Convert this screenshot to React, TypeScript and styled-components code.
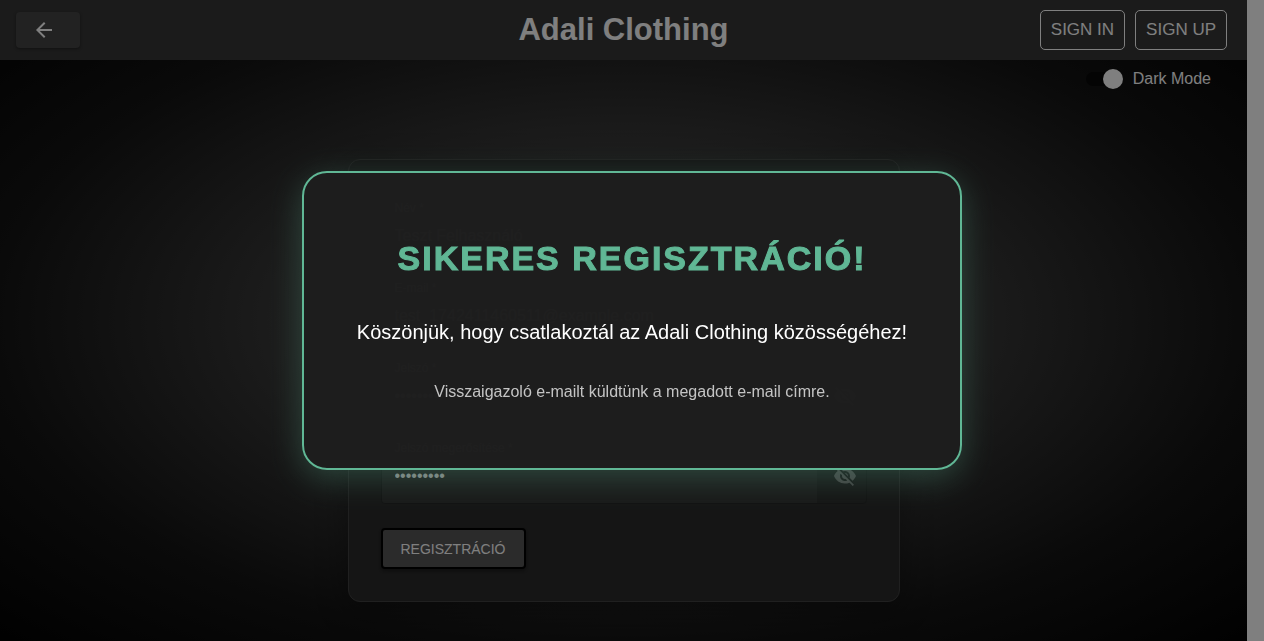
import React from 'react';
import styled, { createGlobalStyle } from 'styled-components';

const GlobalStyle = createGlobalStyle`
  *, *::before, *::after { box-sizing: border-box; }
  html, body, #root { height: 100%; }
  body {
    margin: 0;
    overflow: hidden;
    background: #000;
    color: #fff;
    font-family: "Liberation Sans", Arial, sans-serif;
  }
  button, input { font: inherit; color: inherit; }
`;

const Screen = styled.div`
  display: grid;
  grid-template-columns: 1fr 17px;
  height: 100%;
`;

const Page = styled.div`
  height: 100%;
  overflow: hidden;
  background: radial-gradient(ellipse at center, #646464 0%, #141414 72%, #020202 100%);
`;

const ScrollTrack = styled.div`
  background: #fff;
`;

const Header = styled.header`
  display: grid;
  grid-template-columns: 1fr auto 1fr;
  align-items: center;
  height: 60px;
  background: #363636;
`;

const BackButton = styled.button`
  display: flex;
  align-items: center;
  width: 64px;
  height: 36px;
  margin-left: 16px;
  padding: 0 16px;
  border: 0;
  border-radius: 4px;
  background: #444;
  box-shadow: 0 1px 3px rgba(0, 0, 0, 0.4);
`;

const Brand = styled.h1`
  margin: 0;
  font-size: 31px;
  line-height: 60px;
  height: 60px;
`;

const Actions = styled.nav`
  display: flex;
  justify-content: flex-end;
  gap: 10px;
  padding-right: 20px;
`;

const OutlineButton = styled.button`
  height: 40px;
  padding: 0 10px;
  border: 1px solid #fff;
  border-radius: 5px;
  background: none;
  font-size: 17px;
  line-height: 36px;
`;

const ModeRow = styled.label`
  display: flex;
  align-items: center;
  justify-content: flex-end;
  gap: 10px;
  height: 38px;
  padding-right: 36px;
  font-size: 16px;
`;

const Switch = styled.input`
  appearance: none;
  display: flex;
  align-items: center;
  justify-content: flex-end;
  width: 37px;
  height: 14px;
  margin: 0;
  border-radius: 7px;
  background: #080808;
  &::before {
    content: "";
    flex: none;
    width: 20px;
    height: 20px;
    border-radius: 50%;
    background: #fff;
  }
`;

const CardArea = styled.main`
  position: relative;
  isolation: isolate;
  width: 552px;
  max-width: 100%;
  margin: 61px auto 0;
`;

const Emblem = styled.svg`
  position: absolute;
  z-index: -1;
  top: 134px;
  left: -26px;
`;

const FormCard = styled.form`
  padding: 48px 32px 32px;
  border: 1px solid #404040;
  border-radius: 12px;
  background: #2b2b2b;
  box-shadow: 0 8px 32px rgba(0, 0, 0, 0.3);
`;

const Field = styled.div`
  position: relative;
  margin-bottom: 24px;
`;

/* The shrunken label sits over the top border of its input. */
const FieldLabel = styled.label`
  position: absolute;
  top: -8px;
  left: 14px;
  font-size: 12px;
  line-height: 16px;
`;

const InputRow = styled.div`
  display: flex;
  height: 56px;
  border-radius: 4px;
  overflow: hidden;
  border: 1px solid #242424;
`;

const TextInput = styled.input`
  flex: 1;
  min-width: 0;
  padding: 0 13px;
  border: 0;
  background: #333;
  font-size: 16px;
`;

const EyeButton = styled.button`
  display: grid;
  place-items: center;
  width: 49px;
  padding: 0 0 0 8px;
  border: 0;
  background: transparent;
  color: #808080;
`;

const SubmitButton = styled.button`
  display: block;
  height: 41px;
  padding: 0 18px;
  border: 2px solid #000;
  border-radius: 4px;
  background: #565656;
  box-shadow: 0 2px 4px rgba(0, 0, 0, 0.4);
  font-size: 14px;
`;

const Backdrop = styled.div`
  position: fixed;
  inset: 0;
  display: grid;
  place-items: center;
  background: rgba(0, 0, 0, 0.5);
`;

const Dialog = styled.section`
  width: 660px;
  max-width: 90%;
  padding: 63px 32px 64px;
  border: 2px solid #60b795;
  border-radius: 25px;
  background: rgba(30, 30, 30, 0.98);
  box-shadow: 0 8px 32px rgba(96, 183, 149, 0.3);
  text-align: center;
`;

const DialogTitle = styled.h2`
  margin: 0 0 36px;
  color: #60b795;
  font-size: 34px;
  font-weight: 900;
  line-height: 44px;
  letter-spacing: 2px;
  -webkit-text-stroke: 1px currentColor;
`;

const DialogLead = styled.p`
  margin: 0 0 32px;
  font-size: 20px;
  line-height: 32px;
`;

const DialogNote = styled.p`
  margin: 0;
  color: #c4c4c4;
  font-size: 16px;
  line-height: 24px;
`;

const ArrowIcon = () => (
  <svg width="24" height="24" viewBox="0 0 24 24" fill="currentColor" aria-hidden="true">
    <path d="M20 11H7.83l5.59-5.59L12 4l-8 8 8 8 1.41-1.41L7.83 13H20v-2z" />
  </svg>
);

const EyeOffIcon = () => (
  <svg width="24" height="24" viewBox="0 0 24 24" fill="currentColor" aria-hidden="true">
    <path d="M12 7c2.76 0 5 2.24 5 5 0 .65-.13 1.26-.36 1.83l2.92 2.92c1.51-1.26 2.7-2.89 3.43-4.75-1.73-4.39-6-7.5-11-7.5-1.4 0-2.74.25-3.98.7l2.16 2.16C10.74 7.13 11.35 7 12 7zM2 4.27l2.28 2.28.46.46C3.08 8.3 1.78 10.02 1 12c1.73 4.39 6 7.5 11 7.5 1.55 0 3.03-.3 4.38-.84l.42.42L19.73 22 21 20.73 3.27 3 2 4.27zM7.53 9.8l1.55 1.55c-.05.21-.08.43-.08.65 0 1.66 1.34 3 3 3 .22 0 .44-.03.65-.08l1.55 1.55c-.67.33-1.41.53-2.2.53-2.76 0-5-2.24-5-5 0-.79.2-1.53.53-2.2zm4.31-.78l3.15 3.15.02-.16c0-1.66-1.34-3-3-3l-.17.01z" />
  </svg>
);

const fields = [
  { id: 'name', label: 'Név *', type: 'text', value: 'Teszt Felhasználó' },
  { id: 'email', label: 'E-mail *', type: 'email', value: 'test_1742411460511@example.com' },
  { id: 'password', label: 'Jelszó *', type: 'password', value: 'Password1' },
  { id: 'confirm', label: 'Jelszó megerősítése *', type: 'password', value: 'Password1' },
];

export default function App() {
  return (
    <>
      <GlobalStyle />
      <Screen>
        <Page>
          <Header>
            <BackButton type="button" aria-label="Vissza"><ArrowIcon /></BackButton>
            <Brand>Adali Clothing</Brand>
            <Actions>
              <OutlineButton type="button">SIGN IN</OutlineButton>
              <OutlineButton type="button">SIGN UP</OutlineButton>
            </Actions>
          </Header>
          <ModeRow>
            <Switch type="checkbox" role="switch" defaultChecked />
            Dark Mode
          </ModeRow>
          <CardArea>
            <Emblem width="76" height="80" viewBox="0 0 76 80" fill="none" stroke="#000" strokeWidth="2" aria-hidden="true">
              <path d="M5 28A35 35 0 0 1 71 28M15 65A35 35 0 0 0 61 65M0 31H76M0 61H76" />
              <text x="2" y="55" fill="#000" stroke="none" fontSize="24">AD</text>
            </Emblem>
            <FormCard>
              {fields.map((field) => (
                <Field key={field.id}>
                  <InputRow>
                    <TextInput id={field.id} type={field.type} defaultValue={field.value} />
                    {field.type === 'password' && (
                      <EyeButton type="button" aria-label="Jelszó megjelenítése"><EyeOffIcon /></EyeButton>
                    )}
                  </InputRow>
                  <FieldLabel htmlFor={field.id}>{field.label}</FieldLabel>
                </Field>
              ))}
              <SubmitButton type="button">REGISZTRÁCIÓ</SubmitButton>
            </FormCard>
          </CardArea>
        </Page>
        <ScrollTrack />
      </Screen>
      <Backdrop>
        <Dialog role="dialog" aria-labelledby="dialog-title">
          <DialogTitle id="dialog-title">SIKERES REGISZTRÁCIÓ!</DialogTitle>
          <DialogLead>Köszönjük, hogy csatlakoztál az Adali Clothing közösségéhez!</DialogLead>
          <DialogNote>Visszaigazoló e-mailt küldtünk a megadott e-mail címre.</DialogNote>
        </Dialog>
      </Backdrop>
    </>
  );
}
